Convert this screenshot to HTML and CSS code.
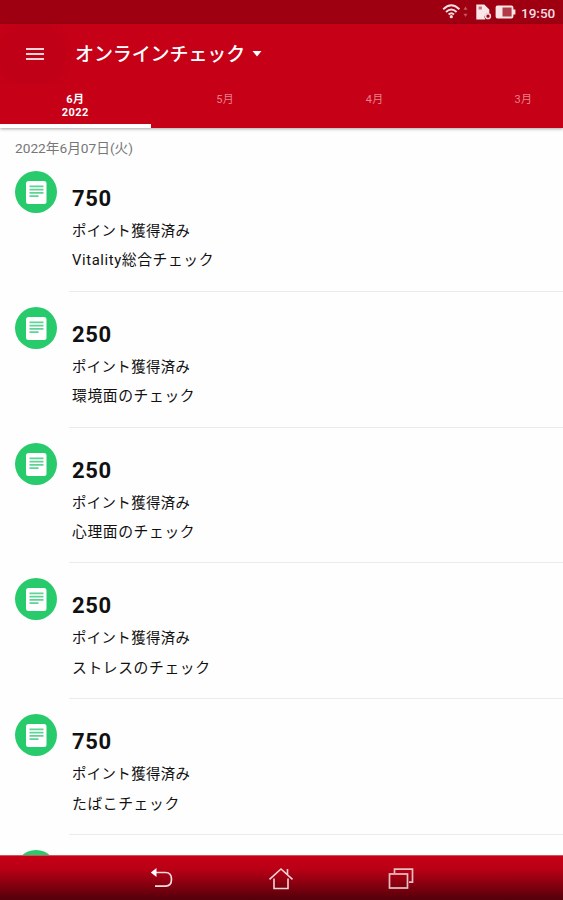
FILE: index.html
```html
<!DOCTYPE html>
<html lang="ja">
<head>
    <meta charset="UTF-8">
    <meta name="viewport" content="width=device-width, initial-scale=1.0">
    <title>オンラインチェック</title>
    <link rel="stylesheet" href="styles.css">
</head>
<body>
    <svg class="symbols" width="0" height="0">
        <symbol id="doc" viewBox="0 0 42 42">
            <rect x="11" y="10" width="20.5" height="23" rx="2.5" fill="#fff"/>
            <path d="M14.5 15.3h14M14.5 18.6h14M14.5 21.9h14M14.5 25.2h9" stroke="#5fd396" stroke-width="1.8"/>
        </symbol>
    </svg>

    <div class="status-bar">
        <svg class="status-icons" width="74" height="24" viewBox="0 0 74 24">
            <!-- wifi -->
            <g fill="none" stroke="#f6dfe1" stroke-width="1.9">
                <path d="M1.2 9.2Q9.3 1.2 17.4 9.2"/>
                <path d="M4 12Q9.3 6.8 14.6 12"/>
                <path d="M6.6 14.5Q9.3 12 12 14.5"/>
            </g>
            <circle cx="9.3" cy="16.7" r="1.6" fill="#f6dfe1"/>
            <path d="M21.5 9.8l2-3.2 2 3.2zM21.5 13.8l2 3.2 2-3.2z" fill="#c8565f"/>
            <!-- sd card -->
            <path d="M34.3 4.5h8l5 5v3.6a4 4 0 0 0-4 6.4h-9z" fill="#f8e6e8"/>
            <rect x="36.6" y="6.5" width="3.3" height="3" fill="#c8737b"/>
            <circle cx="46" cy="16.2" r="2.4" fill="none" stroke="#f6dfe1" stroke-width="1.5"/>
            <!-- battery -->
            <rect x="54.5" y="6.5" width="16" height="11" rx="1" fill="#b23a46" stroke="#f8e6e8" stroke-width="1.8"/>
            <path d="M54.5 6.5h6v11h-6zM71 9.5h2.4v5H71z" fill="#f8e6e8"/>
        </svg>
        <span class="clock">19:50</span>
    </div>

    <header>
        <div class="toolbar">
            <div class="menu-btn">
                <svg width="20" height="16" viewBox="0 0 20 16">
                    <path d="M1 3h18M1 8h18M1 13h18" stroke="#f4d4d7" stroke-width="2"/>
                </svg>
            </div>
            <h1>オンラインチェック</h1>
            <svg class="caret" width="10" height="6" viewBox="0 0 10 6"><path d="M.5 0h9L5 5.5z" fill="#fff"/></svg>
        </div>
        <nav class="tabs">
            <div class="tab active">6月<br>2022</div>
            <div class="tab">5月</div>
            <div class="tab">4月</div>
            <div class="tab last">3月</div>
        </nav>
    </header>

    <main>
        <div class="date">2022年6月07日(火)</div>
        <div class="item">
            <svg class="badge"><use href="#doc"/></svg>
            <div class="info">
                <div class="points">750</div>
                <p>ポイント獲得済み</p>
                <p class="name">Vitality総合チェック</p>
            </div>
        </div>
        <div class="item">
            <svg class="badge"><use href="#doc"/></svg>
            <div class="info">
                <div class="points">250</div>
                <p>ポイント獲得済み</p>
                <p class="name">環境面のチェック</p>
            </div>
        </div>
        <div class="item">
            <svg class="badge"><use href="#doc"/></svg>
            <div class="info">
                <div class="points">250</div>
                <p>ポイント獲得済み</p>
                <p class="name">心理面のチェック</p>
            </div>
        </div>
        <div class="item">
            <svg class="badge"><use href="#doc"/></svg>
            <div class="info">
                <div class="points">250</div>
                <p>ポイント獲得済み</p>
                <p class="name">ストレスのチェック</p>
            </div>
        </div>
        <div class="item">
            <svg class="badge"><use href="#doc"/></svg>
            <div class="info">
                <div class="points">750</div>
                <p>ポイント獲得済み</p>
                <p class="name">たばこチェック</p>
            </div>
        </div>
        <div class="item">
            <svg class="badge"><use href="#doc"/></svg>
        </div>
    </main>

    <footer>
        <svg width="24" height="24" viewBox="0 0 24 24">
            <path d="M5 5.5h10.5q6 0 6 6.8t-6 6.8H5" fill="none" stroke="#f6dadd" stroke-width="1.7"/>
            <path d="M.8 5.5L6.5 1v9z" fill="#fff"/>
        </svg>
        <svg width="26" height="24" viewBox="0 0 26 24" fill="none" stroke="#f3d3d6" stroke-width="1.6">
            <path d="M1.5 12.3L13 2l11.5 10.3M19.5 7.5V2M6 11.5v10h14v-10"/>
        </svg>
        <svg width="26" height="24" viewBox="0 0 26 24" fill="none" stroke="#e9bfc3" stroke-width="1.7">
            <rect x="1.5" y="7" width="18" height="14"/>
            <path d="M6.5 6V2.2h18v13h-3.5"/>
        </svg>
    </footer>
</body>
</html>
```

FILE: styles.css
```css
* {
    margin: 0;
    padding: 0;
    box-sizing: border-box;
}

body {
    height: 900px;
    display: flex;
    flex-direction: column;
    overflow: hidden;
    background: #fefefe;
    color: #111;
    font-family: Roboto, "Noto Sans CJK JP", sans-serif;
}

svg {
    display: block;
    flex: none;
}

.symbols {
    position: absolute;
}

/* Status bar */
.status-bar {
    flex: none;
    height: 24px;
    display: flex;
    justify-content: flex-end;
    align-items: center;
    padding-right: 8px;
    background: #9e0012;
}

.clock {
    width: 34px;
    margin-left: 5px;
    padding-top: 1px;
    font-size: 13.5px;
    font-weight: 500;
    line-height: 20px;
    color: #f6dfe1;
}

/* Header */
header {
    flex: none;
    height: 104px;
    background: #c50017;
    color: #fff;
    box-shadow: 0 1px 3px rgba(0, 0, 0, 0.35);
    z-index: 1;
}

.toolbar {
    height: 60px;
    display: flex;
    align-items: center;
}

.menu-btn {
    width: 75px;
    height: 60px;
    padding-left: 25px;
    display: flex;
    align-items: center;
    background: radial-gradient(circle at 32px 30px, #c00016 30px, transparent 42px);
}

h1 {
    padding-top: 2px;
    font-size: 19px;
    font-weight: 500;
    line-height: 28px;
    letter-spacing: -0.1px;
}

.caret {
    margin-left: 7px;
}

/* Month tabs */
.tabs {
    display: flex;
    height: 44px;
}

.tab {
    flex: none;
    width: 149.5px;
    padding-top: 9px;
    font-size: 11px;
    line-height: 13px;
    letter-spacing: 0.4px;
    text-align: center;
    color: #e9828b;
}

.tab.active {
    width: 150.5px;
    font-weight: bold;
    color: #fff;
    border-bottom: 4px solid #fff;
}

/* the last month is cut by the screen edge */
.tab.last {
    flex: 1;
    width: auto;
    padding-left: 65px;
    text-align: left;
}

/* Check list */
main {
    flex: 1;
    min-height: 0;
    overflow: hidden;
}

.date {
    height: 28px;
    padding: 8px 0 0 15px;
    font-size: 13.7px;
    line-height: 24px;
    color: #777;
}

.item {
    height: 135.8px;
    padding: 15px 0 0 15px;
    display: flex;
    gap: 12px;
}

.badge {
    width: 42px;
    height: 42px;
    border-radius: 50%;
    background: #28cb6c;
}

.info {
    flex: 1;
    padding: 14px 0 0 3px;
    border-bottom: 1px solid #ebebeb;
}

.points {
    margin-bottom: 5px;
    font-size: 22px;
    font-weight: bold;
    line-height: 28px;
    letter-spacing: 0.6px;
}

.info p {
    font-size: 14.4px;
    line-height: 28.4px;
    letter-spacing: 0.4px;
}

.info .name {
    font-size: 14.8px;
    letter-spacing: 0.6px;
}

/* System navigation */
footer {
    flex: none;
    height: 45px;
    padding: 1px 0 0 1px;
    display: flex;
    justify-content: center;
    align-items: center;
    gap: 94px;
    border-top: 1px solid #d1525d;
    background: linear-gradient(#c60017 0%, #b90015 30%, #52000a 100%);
}
```
